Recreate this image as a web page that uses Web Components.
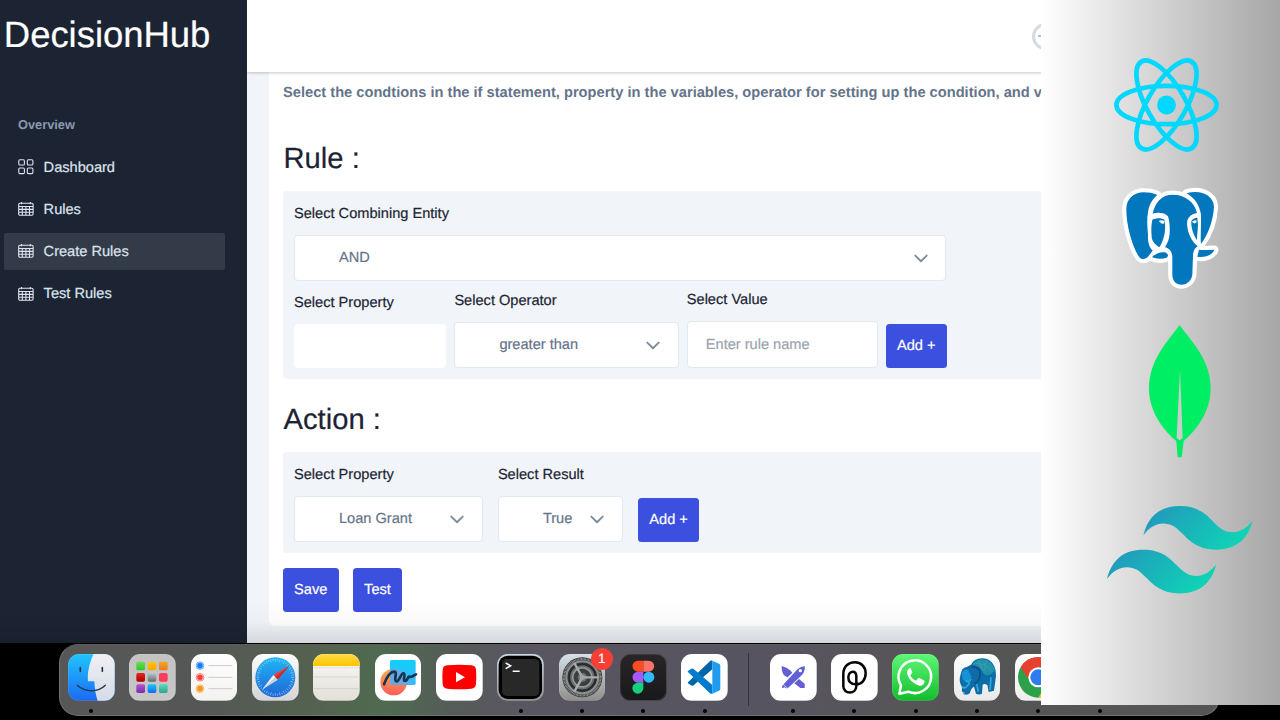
<!DOCTYPE html>
<html lang="en">
<head>
<meta charset="utf-8">
<title>DecisionHub</title>
<style>
html,body{margin:0;height:100%;background:#000;overflow:hidden}
body{font-family:"Liberation Sans",Arial,Helvetica,sans-serif;font-size:14.6px;text-rendering:geometricPrecision;color:#1c2434;-webkit-text-stroke-width:.2px}
</style>
</head>
<body>
<desk-top></desk-top>
<script>
const define = (name, html) => {
  customElements.define(name, class extends HTMLElement {
    connectedCallback() {
      if (this.shadowRoot) return;
      this.attachShadow({ mode: 'open' }).innerHTML = typeof html === 'function' ? html(this) : html;
    }
  });
};

const glyphs = {
  grid: '<g fill="none" stroke="#dee4ee" stroke-width="1.1"><rect x=".8" y=".8" width="5.6" height="5.2" rx="1.1"/><rect x="9.3" y=".8" width="5.6" height="5.2" rx="1.1"/><rect x=".8" y="9" width="5.6" height="5.6" rx="1.1"/><rect x="9.3" y="9" width="5.6" height="5.6" rx="1.1"/></g>',
  table: '<g fill="none" stroke="#dee4ee" stroke-width="1.1"><rect x=".7" y="2.2" width="14.4" height="12" rx="1.2"/><path d="M.7 5.5h14.4M.7 8.4h14.4M.7 11.3h14.4M4.3 5.5v8.7M7.900 5.5v8.7M11.5 5.5v8.7M3.5 1v2.2M12.3 1v2.2"/></g>'
};

define('nav-item', el => `
<style>
:host{display:flex;align-items:center;gap:9.6px;height:36.6px;padding-left:14px;border-radius:2px;color:#dee4ee}
:host([active]){background:#333a48}
svg{width:16px;height:16px}
span{padding-top:1.6px}
</style>
<svg viewBox="0 0 16 16">${glyphs[el.getAttribute('icon')]}</svg><span><slot></slot></span>`);

define('side-bar', `
<style>
:host{display:block;width:247px;flex:none;background:#1c2434;height:643px;box-sizing:border-box;padding:0 22.5px 0 4px}
h1{margin:0 0 49px -.2px;font-weight:400;font-size:36.5px;letter-spacing:-.04px;line-height:69px;height:67px;color:#fff}
h3{margin:0 0 14px 14px;font-size:12.8px;line-height:18px;height:19px;color:#8a99af;-webkit-text-stroke-width:0}
nav{display:flex;flex-direction:column;gap:5.5px}
</style>
<h1>DecisionHub</h1>
<h3>Overview</h3>
<nav>
<nav-item icon="grid">Dashboard</nav-item>
<nav-item icon="table">Rules</nav-item>
<nav-item icon="table" active>Create Rules</nav-item>
<nav-item icon="table">Test Rules</nav-item>
</nav>`);

define('top-header', `
<style>
:host{display:flex;align-items:center;height:72px;background:#fff;box-shadow:0 1px 3px rgba(0,0,0,.22);position:relative;padding-left:785px}
i{display:flex;align-items:center;justify-content:center;width:21px;height:21px;border:3px solid #d3dae1;border-radius:50%}
i::before{content:"";width:15px;height:1.500px;background:#b9c0c8}
</style><i></i>`);

define('ui-select', `
<style>
:host{display:flex;box-sizing:border-box;align-items:center;justify-content:space-between;height:46px;border:1px solid #e2e8f0;border-radius:4px;background:#fff;color:#64748b;padding:0 17.5px 0 44px}
svg{width:14px;height:9px}
</style>
<span><slot></slot></span>
<svg viewBox="0 0 14 9"><path d="M1.3 1.6 7 7.2l5.7-5.6" fill="none" stroke="#7f8c9b" stroke-width="1.9" stroke-linecap="round" stroke-linejoin="round"/></svg>`);

define('ui-input', `
<style>
:host{display:flex;box-sizing:border-box;align-items:center;height:47px;border:1px solid #e2e8f0;border-radius:4px;background:#fff;color:#9ca3af;padding:0 0 0 18px}
:host([plain]){height:44px;border:0}
</style><span><slot></slot></span>`);

define('ui-button', `
<style>
:host{display:flex;box-sizing:border-box;align-items:center;justify-content:center;height:44px;border-radius:3.5px;background:#3c50e0;color:#fff}
</style><span><slot></slot></span>`);

define('form-field', el => `
<style>
:host{display:block;width:${el.getAttribute('width')}px;flex:none}
label{display:block;padding-top:1.6px;line-height:42.4px;white-space:nowrap}
</style><label>${el.getAttribute('label')}</label><slot></slot>`);

define('rule-panel', `
<style>
:host{display:block;background:#f1f5f9;border-radius:4px;padding:0 11px 11px}
</style><slot></slot>`);

define('rule-page', `
<style>
:host{display:block;padding-left:22px;height:571px;background:#f1f5f9}
main{width:1060px;box-sizing:border-box;height:554px;background:#fff;border-radius:0 0 6px 6px;padding:0 14px}
p{margin:0;font-weight:700;padding-top:2px;line-height:39px;color:#64748b;white-space:nowrap;font-size:14.66px;-webkit-text-stroke-width:0}
h2{margin:12px 0 0 .5px;font-size:29.2px;font-weight:400;padding-top:2px;line-height:64px}
h2.second{margin-top:7px}
.row{display:flex;align-items:flex-end}
.first{height:87px;gap:8px}
.gap{gap:15.2px}
.actions{display:flex;gap:14.5px;margin-top:14.5px}
</style>
<main>
<p>Select the condtions in the if statement, property in the variables, operator for setting up the condition, and value</p>
<h2>Rule :</h2>
<rule-panel>
<form-field label="Select Combining Entity" width="652.4"><ui-select>AND</ui-select></form-field>
<div class="row first">
<form-field label="Select Property" width="152.4"><ui-input plain></ui-input></form-field>
<form-field label="Select Operator" width="224.4"><ui-select>greater than</ui-select></form-field>
<form-field label="Select Value" width="191"><ui-input>Enter rule name</ui-input></form-field>
<ui-button style="width:61px">Add +</ui-button>
</div>
</rule-panel>
<h2 class="second">Action :</h2>
<rule-panel>
<div class="row gap">
<form-field label="Select Property" width="188.7"><ui-select>Loan Grant</ui-select></form-field>
<form-field label="Select Result" width="125"><ui-select>True</ui-select></form-field>
<ui-button style="width:61px">Add +</ui-button>
</div>
</rule-panel>
<div class="actions"><ui-button style="width:55.5px">Save</ui-button><ui-button style="width:49px">Test</ui-button></div>
</main>`);

define('app-window', `
<style>
:host{display:flex;height:643px;overflow:hidden;position:relative}
section{flex:1;min-width:0;overflow:hidden}
:host::after{content:"";position:absolute;left:0;right:0;bottom:0;height:45px;pointer-events:none;background:linear-gradient(rgba(0,0,0,0),rgba(0,0,0,.025) 55%,rgba(0,0,0,.12))}
</style>
<side-bar></side-bar>
<section><top-header></top-header><rule-page></rule-page></section>`);

const ticks = Array.from({ length: 48 }, (_, i) => `<path d="M70 14v${i % 2 ? 6 : 9}" transform="rotate(${i * 7.5} 70 70)"/>`).join('');
const tile = (a, b) => `<linearGradient id="bg" x2="0" y2="1"><stop stop-color="${a}"/><stop offset="1" stop-color="${b}"/></linearGradient>`;
const pad = (x, y, a, b) => `<linearGradient id="p${x}${y}" x2="0" y2="1"><stop stop-color="${a}"/><stop offset="1" stop-color="${b}"/></linearGradient><rect x="${x}" y="${y}" width="26" height="26" rx="5" fill="url(#p${x}${y})"/>`;

const apps = {
  finder: ['#21c5ff', '#1b6af3', `<linearGradient id="f" x2="0" y2="1"><stop stop-color="#f0f0f3"/><stop offset="1" stop-color="#d3dce8"/></linearGradient>
    <path d="M77 0C63 28 58 58 60 82h19c1 22 4 42 10 58h51V0z" fill="url(#f)"/><g fill="none" stroke="#23344a" stroke-width="5" stroke-linecap="round"><path d="M37 41v11M103 41v11"/><path d="M28 94c24 22 62 22 84 0" stroke-width="4"/></g>`],
  launchpad: ['#c3c3c3', '#c7c7c7', pad(22,23,'#6be14f','#2cc72c') + pad(56,23,'#ffc61a','#f9a800') + pad(90,23,'#f7a51c','#ee7726') + pad(22,57,'#e02a20','#b00000') + pad(56,57,'#bcc8cb','#606b6b') + pad(90,57,'#fb3b68','#fb3b4d') + pad(22,91,'#b254d3','#7e2ba8') + pad(56,91,'#10cafa','#1868ef') + pad(90,91,'#5bd7bb','#2ba887')],
  reminders: ['#ffffff', '#f3f2ef', `<g fill="none" stroke-width="2"><circle cx="27" cy="35" r="11.5" stroke="#177efb"/><circle cx="27" cy="70" r="11.5" stroke="#fa4239"/><circle cx="27" cy="104" r="11.5" stroke="#f79411"/></g><circle cx="27" cy="35" r="8.5" fill="#177efb"/><circle cx="27" cy="70" r="8.5" fill="#fa4239"/><circle cx="27" cy="104" r="8.5" fill="#f79411"/><path d="M52 35h72M52 70h72M52 104h72" stroke="#c9cbcd" stroke-width="3"/>`],
  safari: ['#fcfcfc', '#d4d4d8', `<linearGradient id="s" x2="0" y2="1"><stop stop-color="#1fb6f5"/><stop offset="1" stop-color="#1f66d6"/></linearGradient><circle cx="70" cy="70" r="60" fill="url(#s)"/><g stroke="#b9e1fa" stroke-width="1.6">${ticks}</g><path d="M112 35 64 63l13 14z" fill="#f23c36"/><path d="M31 106 64 63l13 14z" fill="#f2f2f5"/><path d="M112 35 70 70l7 7z" fill="#c02c30"/><path d="M31 106 70 70l7 7z" fill="#c8cdd6"/>`],
  notes: ['#faf9f8', '#e3e0d8', `<linearGradient id="n" x2="0" y2="1"><stop stop-color="#ffda48"/><stop offset="1" stop-color="#fdc500"/></linearGradient><path d="M0 0h140v36H0z" fill="url(#n)"/><path d="M3 41h136" stroke="#b5b2ac" stroke-width="2" stroke-dasharray="2 3"/><path d="M0 69h140M0 104h140" stroke="#c9c7c3" stroke-width="2"/>`],
  freeform: ['#ffffff', '#ffffff', `<linearGradient id="a" x2="0" y2="1"><stop stop-color="#fdac4b"/><stop offset="1" stop-color="#ff5d5c"/></linearGradient><linearGradient id="b" x2="0" y2="1"><stop stop-color="#0dd0fa"/><stop offset="1" stop-color="#44b6f5"/></linearGradient><circle cx="56" cy="84" r="40" fill="url(#a)"/><rect x="45" y="18" width="77" height="75" rx="5" fill="url(#b)"/><path d="M45 45.5A40 40 0 0 1 95 92H50q-5 0-5-5z" fill="#7e9fd5" opacity=".75"/><path d="M27 91C35 70 46 53 58 53c11 0-4 29 7 29 8 0 14-27 21-24 7 2-4 23 4 23 8 0 9-15 13-13 5 3 9-1 20-7" fill="none" stroke="#123653" stroke-width="8" stroke-linecap="round" stroke-linejoin="round"/>`],
  youtube: ['#ffffff', '#ffffff', '<path d="M34 34q36-3 72 0 13 1 14 13 2 23 0 44-1 12-14 13-36 3-72 0-13-1-14-13-2-22 0-44 1-12 14-13z" fill="#f00"/><path d="M60 54v31l27-15.5z" fill="#fff"/>'],
  terminal: ['#c3d9e2', '#8b8b89', '<rect x="5" y="5" width="130" height="130" rx="27" fill="#000"/><rect x="15" y="15" width="112" height="111" rx="14" fill="#282828"/><g fill="none" stroke="#fff" stroke-width="4.500"><path d="m26 27 15 8.5L26 44"/><path d="M47 52h21"/></g>'],
  settings: ['#d4e1e8', '#8f8f8a', `<circle cx="70" cy="70" r="60" fill="#303234"/><circle cx="70" cy="70" r="55" fill="none" stroke="#9a9d9d" stroke-width="6" stroke-dasharray="2.5 1.8"/><circle cx="70" cy="70" r="48" fill="none" stroke="#8b8e8f" stroke-width="7"/><circle cx="70" cy="70" r="39" fill="#6c6f70" stroke="#27292a" stroke-width="5"/><circle cx="70" cy="70" r="20" fill="none" stroke="#3b3d3e" stroke-width="12"/><circle cx="70" cy="70" r="29" fill="none" stroke="#999c9c" stroke-width="4"/><g stroke="#a8abab" stroke-width="7"><path d="M70 70h49M70 70 46 27M70 70 46 113"/></g><circle cx="70" cy="70" r="8" fill="#a1a4a4"/>`],
  figma: ['#2a2526', '#17191b', '<path d="M70 20H54a16.5 16.5 0 0 0 0 33h16z" fill="#fa4d23"/><path d="M70 20h16a16.5 16.5 0 0 1 0 33H70z" fill="#fe7367"/><path d="M70 53H54a16.5 16.5 0 0 0 0 33h16z" fill="#a35bff"/><circle cx="86.5" cy="69.5" r="16.5" fill="#32b9fb"/><path d="M70 86H54a16.5 16.5 0 1 0 16 16.5z" fill="#15cf7d"/>'],
  vscode: ['#ffffff', '#ffffff', '<path d="M21 85 85 23q4-4 9-3v26L38 94q-4 3-8 0l-9-6q-2-2 0-3z" fill="#0065a9"/><path d="M21 54 85 116q4 4 9 3V93L38 45q-4-3-8 0l-9 6q-2 2 0 3z" fill="#007acc"/><path d="m94 20 20 9q4 2 4 6v69q0 4-4 6l-20 9z" fill="#1f9cf0"/>'],
  crossed: ['#ffffff', '#ffffff', '<g fill="#625fd6"><path d="M35 36q-1 29 18 34l14-14q-10-13-32-20z"/><path d="M36 96 83 45q12-9 21-8 3 12-8 26l-42 39q-6 2-10-2l-7 3z"/><path d="m73 88 14-13 17 14v13H91z"/></g><circle cx="91" cy="50" r="5" fill="#fff"/><path d="m39 91 14 12" stroke="#fff" stroke-width="2"/>'],
  loop: ['#ffffff', '#ffffff', '<path d="M75 91C60 91 52 85 52 70c0-13 9-17 13-17 8 0 11 6 11 14v29c0 26-39 26-39 1V60c0-25 18-35 35-35 20 0 32 15 32 33 0 20-12 33-29 33z" fill="none" stroke="#050505" stroke-width="7.5"/>'],
  whatsapp: ['#5ff777', '#13bd2d', '<path d="M27 94A49 49 0 1 1 49 113L22 119z" fill="none" stroke="#fff" stroke-width="7.500" stroke-linejoin="round"/><path d="M54 42q-11 5-8 19 7 25 36 34 12 2 16-11 0-4-4-6l-12-6q-3-1-5 2l-5 6q-12-4-17-16l5-6q2-3 0-6l-3-8q-1-2-3-2z" fill="#fff"/>'],
  elephant: ['#ffffff', '#e8e8e8', '<path d="M20 61Q22 42 38 39l13-7q12-21 36-19 39 4 39 54l-6 43-16 4-4-21q-9-5-14-1l-2 27q-8 5-18 0l-6-21q-10 5-12 19-9 9-22 2l8-2q-15-2-9-16-13-18-5-40z" fill="#0e6da9"/><path d="M54 32Q72 10 97 18q19 8 26 28-17 29-36 10-6-20-33-24z" fill="#2192a9"/><path d="M25 55q7-13 18-6l9 19q-5 18-18 17-13-10-9-30z" fill="#1792d5"/><path d="M52 39q24-2 27 19-3 28-18 30" fill="none" stroke="#08518c" stroke-width="5"/><path d="M36 79q9 10 15-4M24 98q10 11 23-12M68 90l5 23M111 70l-3 38" fill="none" stroke="#32a9da" stroke-width="5"/><path d="M61 27l30 5 27 22M73 20l15 32M98 21l-8 30" stroke="#67b7b2" stroke-width="2" stroke-dasharray="3 3" fill="none"/>'],
  chrome: ['#ffffff', '#eeeeee', '<circle cx="70" cy="70" r="61" fill="#2da04a"/><path d="M17 40a61 61 0 0 1 106 0H70L45 82z" fill="#e6402f"/><path d="M123 40a61 61 0 0 1-53 91l27-46-9-45z" fill="#fcc31d"/><circle cx="70" cy="70" r="30" fill="#fff"/><circle cx="70" cy="70" r="24" fill="#2f7cf0"/>'],
  blank: ['#ffffff', '#eeeeee', '']
};

define('dock-icon', el => {
  const [a, b, art] = apps[el.getAttribute('app')];
  return `
<style>
:host{display:flex;flex-direction:column;align-items:center;width:46.67px;flex:none;position:relative;gap:8.6px}
svg{width:46.67px;height:46.67px;display:block;border-radius:11px}
i{width:4px;height:4px;border-radius:50%;background:#000;visibility:hidden}
:host([open]) i{visibility:visible}
b{position:absolute;right:-7.5px;top:-6.2px;width:22px;height:22px;border-radius:50%;background:#f93e35;color:#fff;font:13.5px/22px "Liberation Sans",sans-serif;text-align:center}
</style>
<svg viewBox="0 0 140 140"><defs>${tile(a, b)}</defs><rect width="140" height="140" fill="url(#bg)"/>${art}<rect x=".7" y=".7" width="138.6" height="138.6" rx="32" fill="none" stroke="#fff" stroke-opacity=".18" stroke-width="2"/></svg>
<i></i>${el.hasAttribute('badge') ? `<b>${el.getAttribute('badge')}</b>` : ''}`;
});

define('dock-bar', `
<style>
:host{display:flex;gap:14.67px;box-sizing:border-box;width:1161.5px;height:72px;margin:1px 0 0 58.5px;padding:9.2px 0 0 8.6px;border:1px solid #737373;border-top-color:#5c5c5c;border-radius:19px;
background:linear-gradient(90deg,#575757 0,#555756 12%,#54624f 22%,#4e6b50 28%,#565b58 34%,#595661 40%,#575461 60%,#575558 72%,#555 80%)}
hr{width:12.67px;height:53px;margin:-1px 0 0;border:0;flex:none;background:linear-gradient(#343338,#343338) center/1px 100% no-repeat}
</style>
<dock-icon app="finder" open></dock-icon><dock-icon app="launchpad"></dock-icon><dock-icon app="reminders"></dock-icon><dock-icon app="safari"></dock-icon><dock-icon app="notes"></dock-icon><dock-icon app="freeform"></dock-icon><dock-icon app="youtube"></dock-icon><dock-icon app="terminal" open></dock-icon><dock-icon app="settings" badge="1" open></dock-icon><dock-icon app="figma" open></dock-icon><dock-icon app="vscode" open></dock-icon>
<hr>
<dock-icon app="crossed" open></dock-icon><dock-icon app="loop" open></dock-icon><dock-icon app="whatsapp" open></dock-icon><dock-icon app="elephant" open></dock-icon><dock-icon app="chrome" open></dock-icon><dock-icon app="blank" open></dock-icon>`);

define('tech-panel', `
<style>
:host{display:flex;flex-direction:column;position:absolute;right:0;top:0;width:239px;height:705px;background:linear-gradient(90deg,#fff,#a6a6a6)}
svg{display:block;flex:none;overflow:visible}
.react{width:105px;height:94px;margin:57.5px 0 0 72.8px}
.pg{width:96.67px;height:100.67px;margin:36.8px 0 0 81px}
.leaf{width:61.67px;height:132.33px;margin:35.7px 0 0 108.3px}
.wind{width:145.67px;height:87.4px;margin:48.7px 0 0 66.3px}
</style>
<svg class="react" viewBox="-52.5 -47 105 94"><g fill="none" stroke="#00d8ff" stroke-width="4.7"><ellipse rx="50.1" ry="19.2"/><ellipse rx="50.1" ry="19.2" transform="rotate(60)"/><ellipse rx="50.1" ry="19.2" transform="rotate(120)"/></g><circle r="9.4" fill="#00d8ff"/></svg>
<svg class="pg" viewBox="66 55 290 302"><defs><g id="e">
<path d="M132 68C100 68 79 88 79 120c0 45 16 105 36 138 7 12 20 14 30 2l13-17c-11-11-15-25-14-48-2-25-4-45 0-67 4-26 14-40 28-52-12-6-27-8-40-8z"/>
<path d="M218 75c-33 0-53 23-60 57 12-5 36-5 46 8 6 20 7 45 3 65-2 10-8 20-12 28 12 2 21 12 22 29v53c1 20 11 30 28 30 17-1 29-12 32-30l2-57c1-15 6-23 14-28-18-15-31-40-32-70 1-18 14-28 30-30-6-32-36-55-73-55z"/>
<path d="M157 150c13-6 27-6 36 0 4 15 3 35-1 50-4 15-8 25-14 33-13-8-24-21-23-33-2-20-1-35 2-50z"/>
<path d="M274 155c3-7 10-11 18-11l2 21c-1 20-3 35-3 47-11-17-18-37-17-57z"/>
<path d="M260 71c40-12 80 4 82 40-2 40-17 83-39 112-2-18 1-58 0-88-3-25-18-50-43-64z"/>
<path d="M156 262c12-10 24-16 39-14 10 4 11 12 5 16-15 5-32 4-44-2z"/>
<path d="M297 240c13 3 30 0 46 0-4 15-28 25-51 21z"/></g></defs>
<use href="#e" fill="#fff" stroke="#fff" stroke-width="25" stroke-linejoin="round"/><use href="#e" fill="#0277bd"/>
<path d="M176 154q8-4 17 0v5q-4 6-9 2-4-4-8-7zM275 157q6-6 14-5l1 5q-3 5-8 4-2-3-7-4z" fill="#fff"/></svg>
<svg class="leaf" viewBox="178 44 185 397"><path d="M270 44C302 91 363 145 363 235c0 64-38 120-81 157l-6 49h-12l-4-49C216 355 178 299 178 235c0-90 62-148 92-191zm1 134-10 205 9 7 9-7z" fill="#00ee64" fill-rule="evenodd"/></svg>
<svg class="wind" viewBox="0 0 54 32.4"><defs><linearGradient id="t" x1="-.028" y1=".32" x2="1" y2=".676"><stop stop-color="#2298bd"/><stop offset="1" stop-color="#0ed7b5"/></linearGradient></defs><path fill="url(#t)" d="M27 0c-7.2 0-11.7 3.6-13.5 10.8 2.7-3.6 5.85-4.95 9.45-4.05 2.054.513 3.522 2.004 5.147 3.653C30.744 13.09 33.808 16.2 40.5 16.2c7.2 0 11.7-3.6 13.5-10.8-2.7 3.6-5.85 4.95-9.45 4.05-2.054-.513-3.522-2.004-5.147-3.653C36.756 3.11 33.692 0 27 0z"/><path fill="url(#t)" d="M13.5 16.2C6.3 16.2 1.8 19.8 0 27c2.7-3.6 5.85-4.95 9.45-4.05 2.054.514 3.522 2.004 5.147 3.653C17.244 29.29 20.308 32.4 27 32.4c7.2 0 11.7-3.6 13.5-10.8-2.7 3.6-5.85 4.95-9.45 4.05-2.054-.513-3.522-2.004-5.147-3.653C23.256 19.31 20.192 16.2 13.5 16.2z"/></svg>`);

define('desk-top', `
<style>
:host{display:flex;flex-direction:column;position:relative;width:1280px;height:720px;overflow:hidden;background:#000}
</style>
<app-window></app-window><dock-bar></dock-bar><tech-panel></tech-panel>`);
</script>
</body>
</html>
